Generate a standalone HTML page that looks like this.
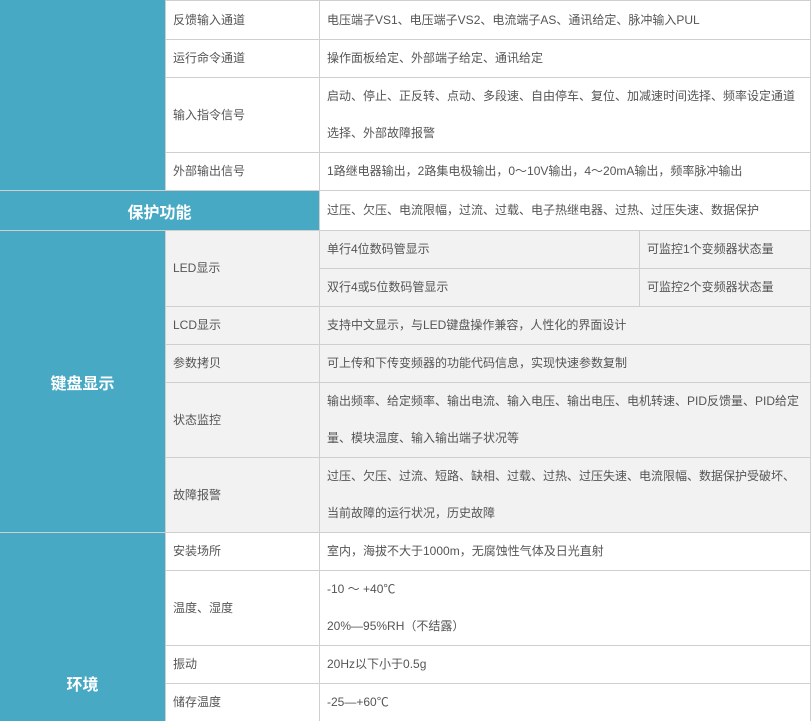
<!DOCTYPE html>
<html><head><meta charset="utf-8"><style>
body{margin:0;width:811px;height:721px;overflow:hidden;background:#fff;}
#w{position:relative;width:811px;height:721px;background:#cfcfcf;font-family:"Liberation Sans","Noto Sans CJK SC",sans-serif;font-size:12px;color:#555;}
.c{position:absolute;box-sizing:border-box;display:flex;align-items:center;padding-left:7px;line-height:37px;background:#fff;}
.g{background:#f2f2f2;}
.t{position:absolute;background:#48a9c4;color:#fff;font-weight:bold;font-size:16px;display:flex;align-items:center;justify-content:center;}
</style></head><body><div id="w">
<div class="t" style="left:0;top:0;width:165px;height:190px"></div>
<div class="t" style="left:0;top:191px;width:319px;height:39px">保护功能</div>
<div class="t" style="left:0;top:231px;width:165px;height:301px">键盘显示</div>
<div class="t" style="left:0;top:533px;width:165px;height:188px;align-items:flex-start;"><span style="position:absolute;top:138px">环境</span></div>

<div class="c" style="left:166px;top:1px;width:153px;height:38px">反馈输入通道</div>
<div class="c" style="left:320px;top:1px;width:490px;height:38px">电压端子VS1、电压端子VS2、电流端子AS、通讯给定、脉冲输入PUL</div>
<div class="c" style="left:166px;top:40px;width:153px;height:37px">运行命令通道</div>
<div class="c" style="left:320px;top:40px;width:490px;height:37px">操作面板给定、外部端子给定、通讯给定</div>
<div class="c" style="left:166px;top:78px;width:153px;height:74px">输入指令信号</div>
<div class="c" style="left:320px;top:78px;width:490px;height:74px">启动、停止、正反转、点动、多段速、自由停车、复位、加减速时间选择、频率设定通道<br>选择、外部故障报警</div>
<div class="c" style="left:166px;top:153px;width:153px;height:37px">外部输出信号</div>
<div class="c" style="left:320px;top:153px;width:490px;height:37px">1路继电器输出，2路集电极输出，0～10V输出，4～20mA输出，频率脉冲输出</div>
<div class="c" style="left:320px;top:191px;width:490px;height:39px">过压、欠压、电流限幅，过流、过载、电子热继电器、过热、过压失速、数据保护</div>

<div class="c g" style="left:166px;top:231px;width:153px;height:75px">LED显示</div>
<div class="c g" style="left:320px;top:231px;width:319px;height:37px">单行4位数码管显示</div>
<div class="c g" style="left:640px;top:231px;width:170px;height:37px">可监控1个变频器状态量</div>
<div class="c g" style="left:320px;top:269px;width:319px;height:37px">双行4或5位数码管显示</div>
<div class="c g" style="left:640px;top:269px;width:170px;height:37px">可监控2个变频器状态量</div>
<div class="c g" style="left:166px;top:307px;width:153px;height:37px">LCD显示</div>
<div class="c g" style="left:320px;top:307px;width:490px;height:37px">支持中文显示，与LED键盘操作兼容，人性化的界面设计</div>
<div class="c g" style="left:166px;top:345px;width:153px;height:37px">参数拷贝</div>
<div class="c g" style="left:320px;top:345px;width:490px;height:37px">可上传和下传变频器的功能代码信息，实现快速参数复制</div>
<div class="c g" style="left:166px;top:383px;width:153px;height:74px">状态监控</div>
<div class="c g" style="left:320px;top:383px;width:490px;height:74px">输出频率、给定频率、输出电流、输入电压、输出电压、电机转速、PID反馈量、PID给定<br>量、模块温度、输入输出端子状况等</div>
<div class="c g" style="left:166px;top:458px;width:153px;height:74px">故障报警</div>
<div class="c g" style="left:320px;top:458px;width:490px;height:74px">过压、欠压、过流、短路、缺相、过载、过热、过压失速、电流限幅、数据保护受破坏、<br>当前故障的运行状况，历史故障</div>

<div class="c" style="left:166px;top:533px;width:153px;height:37px">安装场所</div>
<div class="c" style="left:320px;top:533px;width:490px;height:37px">室内，海拔不大于1000m，无腐蚀性气体及日光直射</div>
<div class="c" style="left:166px;top:571px;width:153px;height:74px">温度、湿度</div>
<div class="c" style="left:320px;top:571px;width:490px;height:74px">-10 ～ +40℃<br>20%—95%RH（不结露）</div>
<div class="c" style="left:166px;top:646px;width:153px;height:37px">振动</div>
<div class="c" style="left:320px;top:646px;width:490px;height:37px">20Hz以下小于0.5g</div>
<div class="c" style="left:166px;top:684px;width:153px;height:37px">储存温度</div>
<div class="c" style="left:320px;top:684px;width:490px;height:37px">-25—+60℃</div>
</div></body></html>
